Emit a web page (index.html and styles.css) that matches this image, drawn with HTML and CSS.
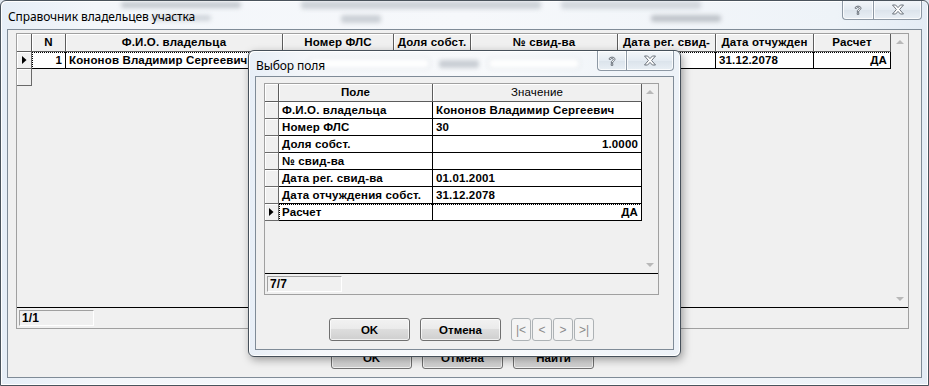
FILE: index.html
```html
<!DOCTYPE html>
<html lang="ru">
<head>
<meta charset="utf-8">
<title>Справочник владельцев участка</title>
<link rel="stylesheet" href="styles.css">
</head>
<body>
<div class="window">
  <div class="glass-blur">
    <span class="bl b1"></span><span class="bl b2"></span><span class="bl b3"></span><span class="bl b4"></span><span class="bl b5"></span><span class="bl b6"></span>
  </div>
  <div class="titlebar">
    <span class="title">Справочник владельцев участка</span>
    <div class="caption-btns">
      <span class="cbtn help"><svg width="12" height="12" viewBox="0 0 12 12"><path d="M3 4.2 C3 1.6 9 1.4 9 4.2 C9 6 6.8 6 6.8 7.6 L5.2 7.6 C5.2 5.4 7.4 5.4 7.4 4.2 C7.4 3 4.6 3 4.6 4.4 Z M5.2 8.6 H6.8 V10.4 H5.2 Z" fill="#fff" stroke="#5f6670" stroke-width="0.9"/></svg></span>
      <span class="cbtn close"><svg width="14" height="11" viewBox="0 0 14 11"><path d="M1.5 1 H4.6 L7 3.6 L9.4 1 H12.5 L8.6 5.5 L12.5 10 H9.4 L7 7.4 L4.6 10 H1.5 L5.4 5.5 Z" fill="#fff" stroke="#5f6670" stroke-width="0.9"/></svg></span>
    </div>
  </div>
  <div class="client">
    <div class="grid outer-grid">
      <div class="grid-main">
        <div class="grid-table">
          <div class="row head">
            <div class="ind hcell"></div>
            <div class="hcell c-n">N</div>
            <div class="hcell c-fio">Ф.И.О. владельца</div>
            <div class="hcell c-fls">Номер ФЛС</div>
            <div class="hcell c-dol">Доля собст.</div>
            <div class="hcell c-svid">№ свид-ва</div>
            <div class="hcell c-dreg">Дата рег. свид-</div>
            <div class="hcell c-dotch">Дата отчужден</div>
            <div class="hcell c-rasch">Расчет</div>
          </div>
          <div class="row data current">
            <div class="ind"><svg width="5" height="8" viewBox="0 0 5 8"><path d="M0 0 L4.5 4 L0 8 Z" fill="#000"/></svg></div>
            <div class="focus">
              <div class="cell c-n right">1</div>
              <div class="cell c-fio">Кононов Владимир Сергеевич</div>
              <div class="cell c-fls right">30</div>
              <div class="cell c-dol right">1.0000</div>
              <div class="cell c-svid"></div>
              <div class="cell c-dreg">01.01.2001</div>
              <div class="cell c-dotch">31.12.2078</div>
              <div class="cell c-rasch right">ДА</div>
            </div>
          </div>
          <div class="row">
            <div class="ind"></div>
          </div>
        </div>
        <div class="vscroll">
          <span class="arr up"></span>
          <span class="arr down"></span>
        </div>
      </div>
      <div class="grid-status">
        <span class="counter">1/1</span>
      </div>
    </div>
    <div class="btn-row">
      <button class="btn">OK</button>
      <button class="btn">Отмена</button>
      <button class="btn">Найти</button>
    </div>
  </div>

  <div class="dialog">
    <div class="glass-blur">
      <span class="bl d1"></span><span class="bl d2"></span><span class="bl d3"></span>
    </div>
    <div class="titlebar dlg-title">
      <span class="title">Выбор поля</span>
      <div class="caption-btns">
        <span class="cbtn help small"><svg width="12" height="12" viewBox="0 0 12 12"><path d="M3 4.2 C3 1.6 9 1.4 9 4.2 C9 6 6.8 6 6.8 7.6 L5.2 7.6 C5.2 5.4 7.4 5.4 7.4 4.2 C7.4 3 4.6 3 4.6 4.4 Z M5.2 8.6 H6.8 V10.4 H5.2 Z" fill="#fff" stroke="#5f6670" stroke-width="0.9"/></svg></span>
        <span class="cbtn close small"><svg width="14" height="11" viewBox="0 0 14 11"><path d="M1.5 1 H4.6 L7 3.6 L9.4 1 H12.5 L8.6 5.5 L12.5 10 H9.4 L7 7.4 L4.6 10 H1.5 L5.4 5.5 Z" fill="#fff" stroke="#5f6670" stroke-width="0.9"/></svg></span>
      </div>
    </div>
    <div class="client dlg-client">
      <div class="grid inner-grid">
        <div class="grid-main">
          <div class="grid-table">
            <div class="row head">
              <div class="ind hcell"></div>
              <div class="hcell f-name">Поле</div>
              <div class="hcell f-val normal">Значение</div>
            </div>
            <div class="row data"><div class="ind"></div><div class="cell f-name">Ф.И.О. владельца</div><div class="cell f-val">Кононов Владимир Сергеевич</div></div>
            <div class="row data"><div class="ind"></div><div class="cell f-name">Номер ФЛС</div><div class="cell f-val">30</div></div>
            <div class="row data"><div class="ind"></div><div class="cell f-name">Доля собст.</div><div class="cell f-val right">1.0000</div></div>
            <div class="row data"><div class="ind"></div><div class="cell f-name">№ свид-ва</div><div class="cell f-val"></div></div>
            <div class="row data"><div class="ind"></div><div class="cell f-name">Дата рег. свид-ва</div><div class="cell f-val">01.01.2001</div></div>
            <div class="row data"><div class="ind"></div><div class="cell f-name">Дата отчуждения собст.</div><div class="cell f-val">31.12.2078</div></div>
            <div class="row data current">
              <div class="ind"><svg width="5" height="8" viewBox="0 0 5 8"><path d="M0 0 L4.5 4 L0 8 Z" fill="#000"/></svg></div>
              <div class="focus">
                <div class="cell f-name">Расчет</div>
                <div class="cell f-val right">ДА</div>
              </div>
            </div>
          </div>
          <div class="vscroll">
            <span class="arr up"></span>
            <span class="arr down"></span>
          </div>
        </div>
        <div class="grid-status">
          <span class="counter">7/7</span>
        </div>
      </div>
      <div class="btn-row dlg-btns">
        <button class="btn">OK</button>
        <button class="btn">Отмена</button>
        <div class="nav">
          <button class="nbtn">|&lt;</button>
          <button class="nbtn">&lt;</button>
          <button class="nbtn">&gt;</button>
          <button class="nbtn">&gt;|</button>
        </div>
      </div>
    </div>
  </div>
</div>
</body>
</html>
```
FILE: styles.css
```css
html, body {
  margin: 0;
  padding: 0;
  width: 929px;
  height: 386px;
  overflow: hidden;
  background: #dfe6ee;
}

.window {
  position: relative;
  width: 929px;
  height: 386px;
  box-sizing: border-box;
  border: 1px solid #4a535c;
  border-radius: 6px 6px 0 0;
  padding: 0 6px 7px 6px;
  display: flex;
  flex-direction: column;
  overflow: hidden;
  background: linear-gradient(90deg, #e6eef7 0%, #f3f6fa 10%, #f6f8fb 50%, #eef3f8 90%, #e4ecf5 100%);
  box-shadow: inset 1px 1px 0 #ffffff, inset -1px -1px 0 #ffffff;
}

.glass-blur {
  position: absolute;
  left: 0;
  top: 0;
  right: 0;
  height: 30px;
  pointer-events: none;
}
.bl {
  position: absolute;
  display: block;
  filter: blur(2px);
  border-radius: 3px;
}
.b1 { left: 120px; top: 1px; width: 120px; height: 6px; background: #c4c9cf; }
.b2 { left: 300px; top: 0px; width: 240px; height: 8px; background: #cdd2d8; }
.b3 { left: 150px; top: 14px; width: 60px; height: 6px; background: #d0d5db; }
.b4 { left: 560px; top: 0px; width: 140px; height: 8px; background: #d2d7dd; }
.b5 { left: 650px; top: 14px; width: 70px; height: 7px; background: #bfc4ca; }
.b6 { left: 340px; top: 14px; width: 40px; height: 8px; background: #cbd0d6; }

.titlebar {
  position: relative;
  height: 28px;
  display: flex;
  align-items: center;
  flex: none;
}
.title {
  font-family: "Noto Sans", "Open Sans", sans-serif;
  font-size: 12px;
  color: #000;
  padding-left: 1px;
  padding-top: 2px;
  letter-spacing: -0.1px;
}

.caption-btns {
  position: absolute;
  right: 0;
  top: -1px;
  display: flex;
}
.cbtn {
  height: 19px;
  display: flex;
  align-items: center;
  justify-content: center;
  border: 1px solid #8d98a4;
  border-top: none;
  background: linear-gradient(#f4f7fa, #e4ebf2 50%, #dbe3eb 51%, #e9eff5);
  box-shadow: inset 0 0 0 1px rgba(255,255,255,0.8);
}
.cbtn.help {
  width: 30px;
  border-radius: 0 0 0 4px;
  border-right: none;
}
.cbtn.close {
  width: 47px;
  border-radius: 0 0 4px 0;
}
.cbtn.small.help { width: 28px; }
.cbtn.small.close { width: 46px; }

.client {
  flex: 1;
  border: 1px solid #7f8b97;
  background: #f0f0f0;
  padding: 3px 12px 0 8px;
  display: flex;
  flex-direction: column;
  min-height: 0;
}

/* grids */
.grid {
  border: 1px solid #a0a0a0;
  background: #f0f0f0;
  display: flex;
  flex-direction: column;
  font-family: "Liberation Sans", Arial, sans-serif;
  font-size: 11.5px;
  font-weight: bold;
  color: #000;
  letter-spacing: 0.15px;
}
.outer-grid { height: 296px; box-sizing: border-box; }
.grid-main {
  flex: 1;
  display: flex;
  border-bottom: 1px solid #000;
  min-height: 0;
}
.grid-table {
  flex: 1;
  display: flex;
  flex-direction: column;
  min-width: 0;
}
.row {
  display: flex;
  height: 17px;
  flex: none;
}
.row.head { height: 18px; }

.ind {
  width: 14px;
  flex: none;
  box-sizing: border-box;
  background: #f0f0f0;
  border-right: 1px solid #696969;
  border-bottom: 1px solid #696969;
  box-shadow: inset 1px 1px 0 #ffffff;
  display: flex;
  align-items: center;
  justify-content: center;
}
.hcell {
  flex: none;
  box-sizing: border-box;
  background: #f0f0f0;
  border-right: 1px solid #5c5c5c;
  border-bottom: 1px solid #5c5c5c;
  box-shadow: inset 1px 1px 0 #ffffff;
  text-align: center;
  line-height: 17px;
  white-space: nowrap;
  overflow: hidden;
}
.hcell.normal { font-weight: normal; }

.cell {
  flex: none;
  box-sizing: border-box;
  background: #fff;
  border-right: 1px solid #000;
  border-bottom: 1px solid #000;
  line-height: 16px;
  padding: 0 3px;
  white-space: nowrap;
  overflow: hidden;
}
.cell.right { text-align: right; }

.focus {
  display: flex;
  outline: 1px dotted #000;
  outline-offset: -1px;
}

/* outer columns */
.outer-grid .ind { width: 15px; }
.c-n { width: 34px; }
.c-fio { width: 217px; }
.c-fls { width: 111px; }
.c-dol { width: 77px; }
.c-svid { width: 147px; }
.c-dreg { width: 98px; }
.c-dotch { width: 98px; }
.c-rasch { width: 77px; }

/* inner columns */
.f-name { width: 154px; }
.f-val { width: 209px; }

.vscroll {
  width: 16px;
  flex: none;
  background: #f0f0f0;
  position: relative;
  display: flex;
  flex-direction: column;
  justify-content: space-between;
  align-items: center;
  padding: 6px 0 6px;
  box-sizing: border-box;
}
.arr {
  width: 0;
  height: 0;
  border-left: 4px solid transparent;
  border-right: 4px solid transparent;
}
.arr.up { border-bottom: 4px solid #b8b8b8; }
.arr.down { border-top: 4px solid #b8b8b8; }

.grid-status {
  height: 20px;
  flex: none;
  display: flex;
  align-items: center;
  padding-left: 2px;
}
.counter {
  width: 75px;
  height: 16px;
  box-sizing: border-box;
  border-top: 1px solid #a0a0a0;
  border-left: 1px solid #a0a0a0;
  border-right: 1px solid #ffffff;
  border-bottom: 1px solid #ffffff;
  font-weight: bold;
  font-family: "Liberation Sans", Arial, sans-serif;
  font-size: 12px;
  line-height: 14px;
  padding-left: 2px;
}

.btn-row {
  display: flex;
  justify-content: center;
  gap: 10px;
  margin-top: 17px;
}
.btn {
  width: 81px;
  height: 23px;
  border: 1px solid #707070;
  border-radius: 3px;
  background: linear-gradient(#f2f2f2 0%, #ebebeb 45%, #dddddd 50%, #cfcfcf 100%);
  box-shadow: inset 0 0 0 1px rgba(255,255,255,0.7);
  font-family: "Liberation Sans", Arial, sans-serif;
  font-weight: bold;
  font-size: 11.5px;
  color: #000;
  padding: 0;
  margin: 0;
}

/* dialog */
.dialog {
  position: absolute;
  left: 247px;
  top: 49px;
  width: 433px;
  height: 307px;
  box-sizing: border-box;
  border: 1px solid #46505a;
  border-radius: 6px;
  padding: 0 6px 6px 6px;
  display: flex;
  flex-direction: column;
  background: linear-gradient(90deg, #e8eff7 0%, #f5f7fa 15%, #f7f9fb 60%, #edf2f8 100%);
  box-shadow: 2px 3px 8px rgba(0,0,0,0.35), inset 1px 1px 0 #fff, inset -1px -1px 0 #fff;
}
.dialog .glass-blur { height: 26px; }
.d1 { left: 60px; top: 8px; width: 120px; height: 9px; background: #ffffff; box-shadow: 0 0 0 1px #d9dee4; }
.d2 { left: 190px; top: 9px; width: 40px; height: 8px; background: #c9ced4; }
.d3 { left: 240px; top: 8px; width: 90px; height: 9px; background: #ffffff; box-shadow: 0 0 0 1px #d9dee4; }
.dlg-title { height: 25px; }
.dlg-title .title { padding-left: 1px; padding-top: 3px; }
.dlg-title .caption-btns { right: 0; top: 0; }
.dlg-client { padding: 6px 14px 0 8px; }
.inner-grid { height: 212px; box-sizing: border-box; }
.dlg-btns {
  justify-content: flex-start;
  padding-left: 65px;
  margin-top: 23px;
}
.nav {
  display: flex;
  gap: 1px;
}
.nbtn {
  width: 20px;
  height: 23px;
  border: 1px solid #adb2b5;
  border-radius: 3px;
  background: #f4f4f4;
  color: #8b8b8b;
  font-family: "Liberation Sans", Arial, sans-serif;
  font-size: 12px;
  padding: 0;
  margin: 0;
}
```
